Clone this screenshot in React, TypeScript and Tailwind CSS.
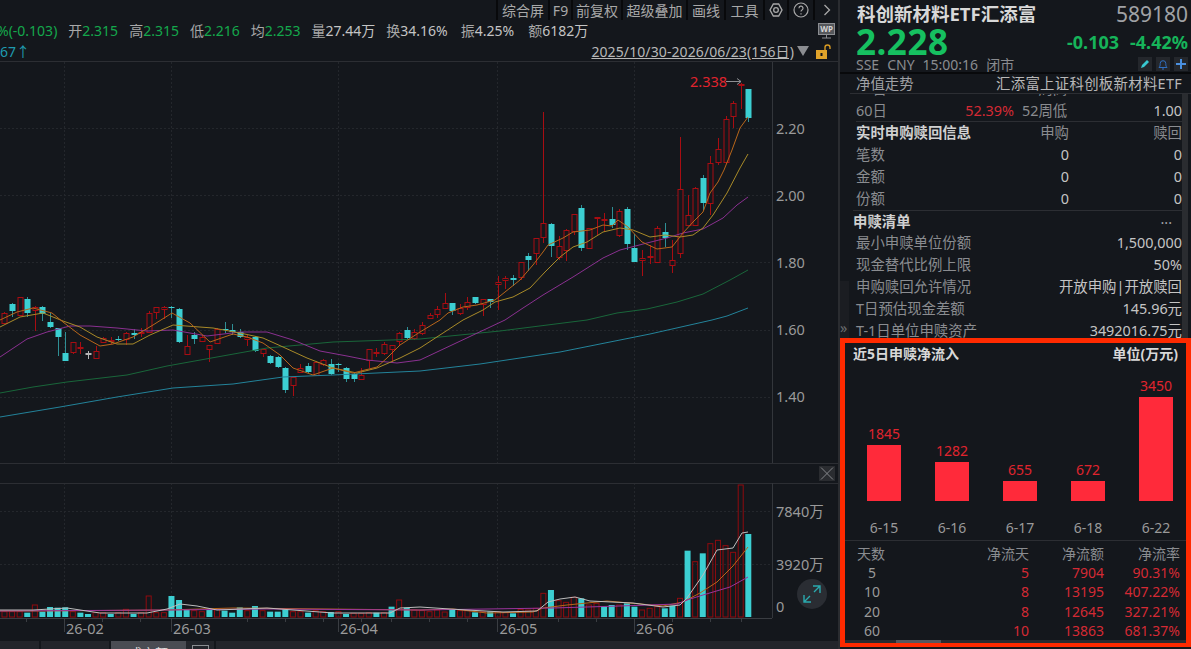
import React from "react";

const FONT = '"Noto Sans", "Noto Sans CJK SC", sans-serif';

// 蜡烛: [实体上, 实体下, 影线上, 影线下, 颜色] 从右往左, 单位是屏幕像素
type Candle = [number, number, number, number, "r" | "c" | "w"];
const candles: Candle[] = [
  [89, 118, 89, 122, "c"], [84, 85, 83, 109, "r"], [103, 116, 101, 128, "r"], [119, 162, 116, 164, "r"],
  [149, 162, 138, 165, "r"], [163, 203, 156, 215, "r"], [178, 203, 175, 210, "c"], [188, 225, 187, 226, "r"],
  [215, 225, 195, 225, "r"], [189, 253, 137, 258, "r"], [260, 265, 240, 273, "r"], [232, 238, 223, 247, "c"],
  [228, 262, 226, 262, "r"], [256, 257, 245, 264, "r"], [258, 260, 250, 276, "r"], [248, 262, 234, 262, "c"],
  [209, 244, 207, 250, "c"], [211, 235, 209, 237, "r"], [219, 225, 207, 228, "c"], [219, 220, 213, 232, "r"],
  [217, 218, 217, 235, "r"], [228, 248, 228, 248, "r"], [208, 248, 205, 251, "c"], [214, 231, 214, 235, "r"],
  [230, 250, 229, 261, "r"], [246, 257, 236, 260, "r"], [224, 246, 223, 257, "c"], [223, 237, 112, 243, "r"],
  [238, 253, 238, 265, "r"], [256, 260, 253, 271, "c"], [262, 277, 262, 280, "r"], [278, 280, 275, 286, "c"],
  [278, 280, 276, 289, "r"], [282, 284, 276, 310, "r"], [299, 302, 299, 308, "c"], [299, 304, 299, 316, "r"],
  [297, 303, 297, 304, "c"], [302, 307, 297, 310, "r"], [308, 313, 304, 315, "r"], [303, 311, 303, 315, "c"],
  [303, 308, 293, 308, "r"], [309, 314, 306, 318, "r"], [315, 318, 313, 319, "r"], [325, 333, 322, 335, "r"],
  [332, 338, 329, 340, "r"], [330, 338, 327, 339, "c"], [333, 341, 332, 345, "r"], [345, 349, 345, 362, "r"],
  [344, 353, 342, 355, "r"], [352, 353, 348, 357, "r"], [349, 360, 349, 368, "r"], [375, 379, 368, 380, "r"],
  [374, 379, 373, 382, "c"], [368, 379, 367, 382, "c"], [364, 365, 363, 372, "c"], [364, 374, 359, 375, "c"],
  [360, 364, 359, 366, "r"], [362, 375, 361, 376, "r"], [366, 372, 363, 373, "c"], [368, 372, 364, 373, "r"],
  [377, 385, 377, 396, "r"], [368, 390, 367, 393, "c"], [357, 367, 356, 368, "c"], [356, 363, 355, 364, "c"],
  [349, 353, 349, 357, "r"], [337, 351, 336, 352, "c"], [337, 339, 335, 346, "r"], [332, 337, 329, 338, "c"],
  [330, 332, 324, 335, "c"], [329, 330, 322, 333, "c"], [329, 343, 328, 344, "r"], [345, 349, 345, 362, "r"],
  [337, 341, 335, 342, "r"], [335, 339, 332, 344, "c"], [346, 354, 335, 355, "r"], [309, 342, 308, 343, "c"],
  [307, 308, 306, 318, "c"], [307, 309, 306, 319, "r"], [307, 312, 307, 319, "r"], [313, 332, 311, 333, "r"],
  [332, 333, 328, 337, "r"], [333, 335, 329, 339, "c"], [333, 339, 332, 345, "r"], [339, 340, 336, 341, "c"],
  [340, 341, 337, 344, "r"], [338, 342, 337, 343, "r"], [351, 358, 346, 359, "r"], [353, 354, 351, 359, "w"],
  [347, 348, 342, 354, "r"], [342, 352, 342, 354, "r"], [353, 361, 332, 361, "c"], [328, 337, 328, 356, "c"],
  [322, 327, 313, 328, "c"], [307, 314, 306, 321, "c"], [307, 310, 306, 331, "r"], [299, 313, 297, 317, "c"],
  [297, 315, 297, 316, "r"], [304, 311, 303, 317, "c"], [313, 323, 312, 324, "r"],
];

// 成交量柱顶 (相对 460 的 3 倍坐标), 从右往左
const vols: [number, "r" | "c"][] = [
  [222, "c"], [75, "r"], [277, "r"], [257, "r"], [241, "r"], [251, "r"], [280, "c"], [305, "r"], [272, "c"], [415, "r"],
  [437, "c"], [445, "c"], [440, "r"], [445, "r"], [450, "r"], [440, "c"], [430, "c"], [435, "r"], [435, "c"], [440, "c"],
  [430, "r"], [435, "r"], [415, "c"], [412, "r"], [427, "r"], [422, "r"], [390, "c"], [400, "r"], [445, "r"], [450, "r"],
  [448, "r"], [460, "c"], [458, "r"], [455, "r"], [455, "c"], [455, "r"], [457, "c"], [452, "r"], [452, "r"], [450, "c"],
  [456, "r"], [450, "r"], [455, "r"], [452, "r"], [450, "r"], [443, "c"], [420, "r"], [440, "c"], [458, "r"], [458, "c"],
  [458, "r"], [460, "r"], [460, "r"], [462, "c"], [455, "r"], [456, "c"], [455, "r"], [452, "r"], [458, "c"], [455, "r"],
  [455, "r"], [448, "c"], [455, "c"], [455, "c"], [452, "r"], [438, "c"], [452, "r"], [442, "c"], [458, "c"], [452, "c"],
  [448, "r"], [450, "c"], [455, "r"], [452, "r"], [450, "c"], [420, "c"], [408, "c"], [458, "r"], [458, "r"], [408, "r"],
  [458, "r"], [462, "c"], [448, "r"], [458, "r"], [462, "c"], [458, "r"], [458, "r"], [462, "c"], [458, "c"], [455, "r"],
  [442, "c"], [443, "c"], [441, "c"], [455, "c"], [435, "r"], [458, "c"], [455, "r"], [455, "r"], [455, "r"],
];

const ma5 = "748,117 740,128 732,150 724,170 718,182 710,193 703,212 693,222 683,233 672,247 657,249 642,242 628,227 618,220 612,226 603,225 590,230 573,232 563,238 548,245 543,252 533,265 520,280 510,288 495,300 477,305 463,307 448,313 440,320 420,332 400,345 387,358 377,367 353,373 333,368 313,375 293,368 280,355 263,343 247,337 233,334 210,342 190,323 172,313 153,325 133,337 113,344 100,346 80,335 63,322 52,313 33,308 17,312 0,320";
const ma10 = "748,154 740,168 727,193 713,215 703,228 693,235 680,237 665,235 650,237 633,230 620,228 603,232 587,242 573,247 560,257 545,272 530,288 513,297 495,302 483,310 463,320 420,348 400,358 377,368 357,373 333,368 307,358 283,347 263,338 240,333 213,328 173,325 150,335 133,344 117,344 97,337 80,327 63,321 43,313 20,317 0,327";
const ma20 = "748,197 737,205 723,218 703,229 683,233 667,238 647,243 620,250 603,258 573,277 543,295 523,308 505,320 420,360 397,363 367,360 347,356 320,351 293,340 267,332 240,332 207,336 173,330 147,331 117,328 90,326 70,326 47,332 27,339 0,357";
const ma60 = "748,270 730,280 703,294 677,302 647,309 617,313 587,320 500,331 420,339 333,342 267,348 217,357 167,366 127,375 67,382 33,387 0,393";
const ma120 = "748,308 727,316 712,320 650,334 560,352 480,364 420,371 333,375 283,377 233,384 173,388 117,397 60,407 0,417";

const volWhite = "748,532 742,533 733,548 717,550 703,575 687,598 680,605 663,607 633,603 590,601 575,597 560,599 548,602 537,611 503,612 467,610 450,609 420,607 400,608 390,613 333,613 293,610 267,608 217,610 197,606 180,604 167,609 147,613 100,613 67,608 33,610 0,610";
const volOrange = "748,547 733,566 717,582 700,593 683,602 663,606 607,601 567,605 543,608 533,612 487,613 453,609 420,610 233,608 167,610 33,611 0,611";
const volPurple = "748,577 730,587 703,595 687,600 677,604 620,606 553,608 420,610 267,609 167,610 0,611";

const hGrid = [128.5, 195.5, 262.5, 330.5, 397.5];
const vGrid = [64.5, 171.5, 338.5, 497.5, 634.5];
const ticks = [26.5, 102.5, 140.5, 247.5, 285.5, 323.5, 361.5, 391.5, 429.5, 467.5, 558.5, 596.5, 672.5, 710.5, 741.5];

function candleX(k: number) {
  return 748.3 - k * 7.59;
}

function Chart() {
  return (
    <svg width="838" height="579" viewBox="0 62 838 579" className="block" style={{ fontFamily: FONT }}>
      {hGrid.map((y) => (
        <line key={y} x1="0" x2="772" y1={y} y2={y} stroke="#24272c" strokeDasharray="2 2" />
      ))}
      {[511.5, 564.5].map((y) => (
        <line key={y} x1="0" x2="772" y1={y} y2={y} stroke="#24272c" strokeDasharray="2 2" />
      ))}
      {vGrid.map((x) => (
        <g key={x}>
          <line x1={x} x2={x} y1="62" y2="463" stroke="#24272c" strokeDasharray="2 2" />
          <line x1={x} x2={x} y1="483" y2="618" stroke="#24272c" strokeDasharray="2 2" />
          <line x1={x} x2={x} y1="618" y2="632" stroke="#3a3d42" />
        </g>
      ))}
      {ticks.map((x) => (
        <line key={x} x1={x} x2={x} y1="618" y2="622" stroke="#3a3d42" />
      ))}
      <line x1="0" x2="838" y1="463.5" y2="463.5" stroke="#2c2e33" />
      <line x1="0" x2="838" y1="483.5" y2="483.5" stroke="#2c2e33" />
      <line x1="0" x2="772" y1="618.5" y2="618.5" stroke="#3a3d42" />
      <line x1="772.5" x2="772.5" y1="62" y2="463" stroke="#33363b" />
      <line x1="772.5" x2="772.5" y1="483" y2="618" stroke="#33363b" />

      {vols.map(([top, c], k) => {
        const x = candleX(k);
        const y = 460 + top / 3;
        return c === "c" ? (
          <rect key={k} x={x - 3} y={y} width="6" height={617 - y} fill="#3ccfd2" />
        ) : (
          <rect key={k} x={x - 2.5} y={y} width="5" height={617 - y} fill="none" stroke="#8f0b0f" />
        );
      })}
      <polyline points={volOrange} fill="none" stroke="#b8661a" />
      <polyline points={volPurple} fill="none" stroke="#9a349c" />
      <polyline points={volWhite} fill="none" stroke="#bdbdbd" />

      {candles.map(([top, bottom, wt, wb, c], k) => {
        const x = Math.round(candleX(k)) + 0.5;
        const stroke = c === "r" ? "#a80d12" : c === "w" ? "#b5b5b5" : "#2f8f95";
        return (
          <g key={k}>
            <line x1={x} x2={x} y1={wt} y2={wb} stroke={stroke} />
            {c === "c" ? (
              <rect x={x - 3} y={top} width="6" height={bottom - top} fill="#3ccfd2" />
            ) : (
              <rect x={x - 2.5} y={top + 0.5} width="5" height={Math.max(bottom - top, 0.5)} fill="#14171c" stroke={stroke} />
            )}
          </g>
        );
      })}
      <polyline points={ma120} fill="none" stroke="#23839a" />
      <polyline points={ma60} fill="none" stroke="#19663a" />
      <polyline points={ma20} fill="none" stroke="#8a3090" />
      <polyline points={ma10} fill="none" stroke="#a88a28" />
      <polyline points={ma5} fill="none" stroke="#b8661a" />

      <text x="690" y="87" fontSize="14.5" fill="#e0242e">2.338</text>
      <path d="M726 81.5H741M737 78.5L741 81.5L737 84.5" fill="none" stroke="#8d8f93" />

      {[["2.20", 134], ["2.00", 201], ["1.80", 268], ["1.60", 335], ["1.40", 402]].map(([t, y]) => (
        <text key={t} x="776" y={y} fontSize="14.5" fill="#9a9a9a">{t}</text>
      ))}
      {[["7840万", 517], ["3920万", 569.5], ["0", 612]].map(([t, y]) => (
        <text key={t} x="776" y={y} fontSize="14.5" fill="#9a9a9a">{t}</text>
      ))}
      {[["26-02", 66], ["26-03", 173], ["26-04", 340], ["26-05", 499.5], ["26-06", 636]].map(([t, x]) => (
        <text key={t} x={x} y="634" fontSize="14.5" fill="#9a9a9a">{t}</text>
      ))}

      <rect x="819" y="466" width="16" height="15" fill="#2a2c30" />
      <path d="M821 467.5L833 479.5M833 467.5L821 479.5" stroke="#85878b" />

      <circle cx="812" cy="594" r="15" fill="#2a2d33" />
      <path d="M804 602L810 596M814 592L820 586M813 586H820V593M804 595V602H811" fill="none" stroke="#2aa9ae" strokeWidth="1.4" />
    </svg>
  );
}

function Sep() {
  return <div className="w-[2px] h-[20px] bg-[#08090b]" />;
}

function Stat({ label, value, green, space = "mr-[11px]" }: { label: string; value: string; green?: boolean; space?: string }) {
  return (
    <span className={`flex ${space}`}>
      <span className="text-[#a8a8a8]">{label}</span>
      <span className={green ? "text-[#14a84c]" : "text-[#c4c4c4]"}>{value}</span>
    </span>
  );
}

function Header() {
  return (
    <div className="h-[62px] border-b border-[#2c2e33] overflow-hidden">
      <div className="h-[20px] flex justify-end items-center text-[#a8a8a8] text-[14px]">
        <Sep />
        <span className="w-[50px] text-center">综合屏</span>
        <Sep />
        <span className="w-[21px] text-center">F9</span>
        <Sep />
        <span className="w-[48px] text-center">前复权</span>
        <Sep />
        <span className="w-[63px] text-center">超级叠加</span>
        <Sep />
        <span className="w-[36px] text-center">画线</span>
        <Sep />
        <span className="w-[37px] text-center">工具</span>
        <Sep />
        <span className="w-[22px] flex justify-center">
          <svg width="16" height="16" viewBox="0 0 24 24" fill="none" stroke="#a8a8a8" strokeWidth="2">
            <path d="M8 3h8l5 9-5 9H8l-5-9z" />
            <circle cx="12" cy="12" r="3.5" />
          </svg>
        </span>
        <Sep />
        <span className="w-[24px] flex justify-center">
          <svg width="16" height="16" viewBox="0 0 16 16" fill="none" stroke="#a8a8a8" strokeWidth="1.2">
            <circle cx="8" cy="8" r="7" />
            <path d="M6 6.2a2 2 0 1 1 3 1.7c-.7.4-1 .8-1 1.6M8 11.2v1.2" />
          </svg>
        </span>
        <Sep />
        <span className="w-[23px] flex justify-center">
          <svg width="8" height="12" viewBox="0 0 8 12" fill="none" stroke="#a8a8a8" strokeWidth="1.3">
            <path d="M1.5 1L6.5 6L1.5 11" />
          </svg>
        </span>
      </div>
      <div className="h-[21px] flex items-center text-[14px] relative">
        <span className="text-[#14a84c] mr-[11px] -ml-[3px]">%(-0.103)</span>
        <Stat label="开" value="2.315" green />
        <Stat label="高" value="2.315" green />
        <Stat label="低" value="2.216" green />
        <Stat label="均" value="2.253" green />
        <Stat label="量" value="27.44万" />
        <Stat label="换" value="34.16%" space="mr-[13px]" />
        <Stat label="振" value="4.25%" space="mr-[14px]" />
        <Stat label="额" value="6182万" />
        <svg className="absolute right-[3px] top-[3px]" width="17" height="16" viewBox="0 0 17 16">
          <rect x="0.5" y="0.5" width="16" height="11" fill="#55575b" stroke="#8b8d91" />
          <path d="M4 15H13M8.5 12v3" stroke="#8b8d91" />
          <text x="8.5" y="9" fontSize="8" fontWeight="700" textAnchor="middle" fill="#d5d5d5">WP</text>
        </svg>
      </div>
      <div className="h-[20px] flex items-center justify-between text-[14px]">
        <span className="text-[#1f9bb0]">67↑</span>
        <span className="flex items-center">
          <span className="text-[#b8b8b8] underline tracking-[0.1px]">2025/10/30-2026/06/23(156日)</span>
          <svg className="ml-[2px]" width="14" height="12" viewBox="0 0 14 12">
            <path d="M1 1H13L7 11Z" fill="#8b8d91" />
          </svg>
          <svg className="ml-[6px] mr-[6px]" width="16" height="15" viewBox="0 0 16 15">
            <path d="M9 6V3.5a2.5 2.5 0 0 1 5 0V5" fill="none" stroke="#d89a22" strokeWidth="1.4" />
            <rect x="0" y="6" width="11" height="9" fill="#e0a32a" />
            <rect x="4.5" y="9" width="2" height="3" fill="#14171c" />
          </svg>
        </span>
      </div>
    </div>
  );
}

function Tabs() {
  return (
    <div className="h-[8px] bg-[#23252b] flex overflow-hidden text-[13px] leading-[18px] text-[#a8a8a8]">
      <div className="w-[41px] border-r-2 border-[#14171c] pl-[6px]">
        <span className="block mt-[3px]">1/2</span>
      </div>
      <div className="w-[70px] border-r-2 border-[#14171c] pl-[6px]">
        <span className="block mt-[3px]">1110 Z</span>
      </div>
      <div className="w-[75px] bg-[#4a4c53] text-[#e0e0e0] text-center">
        <span className="block mt-[3px]">成交额</span>
      </div>
      <div className="w-[30px] border-r-2 border-[#14171c] flex justify-center pt-[4px]">
        <div className="w-[17px] h-[10px] shrink-0 border border-[#8b8d91]" />
      </div>
    </div>
  );
}

function Row({ label, value, bold }: { label: string; value: string; bold?: boolean }) {
  return (
    <div className="h-[22px] flex items-center justify-between">
      <span className={bold ? "text-[#d0d0d0] font-bold" : "text-[#8a8c90]"}>{label}</span>
      <span className="text-[#c4c4c4]">{value}</span>
    </div>
  );
}

function Row3({ label, a, b, head }: { label: string; a: string; b: string; head?: boolean }) {
  return (
    <div className="h-[22px] flex items-center">
      <span className={head ? "text-[#d0d0d0] font-bold flex-1" : "text-[#8a8c90] flex-1"}>{label}</span>
      <span className={head ? "text-[#8a8c90] w-[30px] text-right" : "text-[#c4c4c4] w-[30px] text-right"}>{a}</span>
      <span className={head ? "text-[#8a8c90] w-[113px] text-right" : "text-[#c4c4c4] w-[113px] text-right"}>{b}</span>
    </div>
  );
}

const flows = [
  { date: "6-15", value: 1845 },
  { date: "6-16", value: 1282 },
  { date: "6-17", value: 655 },
  { date: "6-18", value: 672 },
  { date: "6-22", value: 3450 },
];

const netRows = [
  ["5", "5", "7904", "90.31%"],
  ["10", "8", "13195", "407.22%"],
  ["20", "8", "12645", "327.21%"],
  ["60", "10", "13863", "681.37%"],
];

function FlowBox() {
  return (
    <div className="h-[309px] border-[5px] border-[#ff2a00] border-b-[4px] flex flex-col relative">
      <div className="h-[19px] mt-[1px] pl-[8px] pr-[8px] flex items-center justify-between text-[#d8d8d8] font-bold text-[14px]">
        <span>近5日申赎净流入</span>
        <span>单位(万元)</span>
      </div>
      <div className="h-[138px] flex items-end justify-between pl-[22px] pr-[13px]">
        {flows.map((f) => (
          <div key={f.date} className="w-[34px] flex flex-col items-center">
            <span className="text-[#e0242e] text-[14px] leading-[22px]">{f.value}</span>
            <div className="w-[34px] bg-[#ff2a3a]" style={{ height: Math.round(f.value * 0.0301) }} />
          </div>
        ))}
      </div>
      <div className="h-[40px] flex items-center justify-between pl-[22px] pr-[13px] border-b border-[#2c2e33] pt-[14px]">
        {flows.map((f) => (
          <span key={f.date} className="w-[34px] text-center text-[#9a9a9a] text-[14px]">{f.date}</span>
        ))}
      </div>
      <div className="pl-[12px] pr-[6px] pt-[3px] text-[14px]">
        <div className="h-[19px] flex items-center text-[#8a8c90]">
          <span className="w-[30px]">天数</span>
          <span className="w-[142px] text-right">净流天</span>
          <span className="w-[75px] text-right">净流额</span>
          <span className="w-[76px] text-right">净流率</span>
        </div>
        {netRows.map((r) => (
          <div key={r[0]} className="h-[19.3px] flex items-center text-[#d42a34]">
            <span className="w-[30px] text-center text-[#9a9a9a]">{r[0]}</span>
            <span className="w-[142px] text-right">{r[1]}</span>
            <span className="w-[75px] text-right">{r[2]}</span>
            <span className="w-[76px] text-right">{r[3]}</span>
          </div>
        ))}
      </div>
      <div className="absolute left-0 right-0 bottom-0 h-[3px] bg-[#2a2c30]">
        <div className="ml-[51px] w-[45px] h-[3px] bg-[#55575d]" />
      </div>
    </div>
  );
}

function Panel() {
  return (
    <div className="w-[351px] flex flex-col relative">
      <div className="h-[74px] pl-[17px] pr-[3px] border-b-2 border-[#08090b] flex flex-col">
        <div className="h-[28px] flex items-center justify-between">
          <span className="text-[#d8d8d8] font-bold text-[18.5px] leading-[24px]">科创新材料ETF汇添富</span>
          <span className="text-[#a0a2a6] text-[21px] leading-[24px]">589180</span>
        </div>
        <div className="h-[28px] flex items-center justify-between">
          <span className="text-[#16c060] font-bold text-[35px] leading-[28px] tracking-[0.5px] -ml-[1px]">2.228</span>
          <span className="text-[#16b45a] font-bold text-[18px] leading-[24px] flex gap-[11px]">
            <span>-0.103</span>
            <span>-4.42%</span>
          </span>
        </div>
        <div className="h-[16px] flex items-center justify-between">
          <span className="text-[#8a8c90] text-[14px] leading-[16px] flex gap-[8px] pt-[1px] -ml-[1px]">
            <span>SSE</span>
            <span>CNY</span>
            <span>15:00:16</span>
            <span>闭市</span>
          </span>
          <span className="flex gap-[4px]">
            <span className="w-[14px] h-[14px] bg-[#24272c] flex items-center justify-center">
              <svg width="10" height="10" viewBox="0 0 10 10">
                <path d="M1 9L2 6L7 1L9 3L4 8Z" fill="#38c8d0" />
              </svg>
            </span>
            <span className="w-[14px] h-[14px] bg-[#24272c] flex items-center justify-center">
              <svg width="12" height="12" viewBox="0 0 12 12" fill="none" stroke="#2f6fc0">
                <path d="M2 9.5c1-1 1.2-2 1.2-4a2.8 2.8 0 0 1 5.6 0c0 2 .2 3 1.2 4zM5 11h2" />
              </svg>
            </span>
            <span className="w-[14px] h-[14px] bg-[#24272c] flex items-center justify-center">
              <svg width="10" height="10" viewBox="0 0 10 10">
                <path d="M4 0H6V4H10V6H6V10H4V6H0V4H4Z" fill="#4a90e0" />
              </svg>
            </span>
          </span>
        </div>
      </div>
      <div className="h-[20px] ml-[10px] pl-[6px] pr-[9px] flex items-center justify-between border-b border-[#2c2e33] text-[14.4px]">
        <span className="text-[#a0a2a6]">净值走势</span>
        <span className="text-[#b8b8b8] tracking-[0.3px]">汇添富上证科创板新材料ETF</span>
      </div>
      <div className="h-[244px] overflow-hidden flex text-[14.4px]">
        <div className="w-[16px] flex items-end">
          <div className="w-[9px] h-[57px] bg-[#1b1d22] flex items-end text-[#6a6c70] leading-[20px]">»</div>
        </div>
        <div className="w-[326px]">
          <div className="-mt-[16px] h-[22px] flex items-center">
            <span className="w-[44px] text-[#8a8c90]">20日</span>
            <span className="w-[114px] text-right text-[#d42a34]">14.96%</span>
            <span className="ml-[8px] flex-1 text-[#8a8c90]">52周高</span>
            <span className="text-[#c4c4c4]">2.34</span>
          </div>
          <div className="h-[22px] flex items-center border-b border-[#2c2e33]">
            <span className="w-[44px] text-[#8a8c90]">60日</span>
            <span className="w-[114px] text-right text-[#d42a34]">52.39%</span>
            <span className="ml-[8px] flex-1 text-[#8a8c90]">52周低</span>
            <span className="text-[#c4c4c4]">1.00</span>
          </div>
          <Row3 head label="实时申购赎回信息" a="申购" b="赎回" />
          <Row3 label="笔数" a="0" b="0" />
          <Row3 label="金额" a="0" b="0" />
          <Row3 label="份额" a="0" b="0" />
          <div className="h-[22px] flex items-center justify-between border-t border-[#2c2e33] -ml-[3px]">
            <span className="text-[#d0d0d0] font-bold">申赎清单</span>
            <span className="text-[#a0a2a6] mr-[10px] -mt-[6px]">...</span>
          </div>
          <Row label="最小申赎单位份额" value="1,500,000" />
          <Row label="现金替代比例上限" value="50%" />
          <Row label="申购赎回允许情况" value="开放申购|开放赎回" />
          <Row label="T日预估现金差额" value="145.96元" />
          <Row label="T-1日单位申赎资产" value="3492016.75元" />
        </div>
        <div className="w-[6px] bg-[#2a2c30]" />
      </div>
      <FlowBox />
    </div>
  );
}

export default function App() {
  return (
    <div className="w-[1191px] h-[649px] bg-[#14171c] flex overflow-hidden" style={{ fontFamily: FONT }}>
      <div className="w-[838px] flex flex-col">
        <Header />
        <Chart />
        <Tabs />
      </div>
      <div className="w-[2px] bg-[#2a2c30]" />
      <Panel />
    </div>
  );
}
